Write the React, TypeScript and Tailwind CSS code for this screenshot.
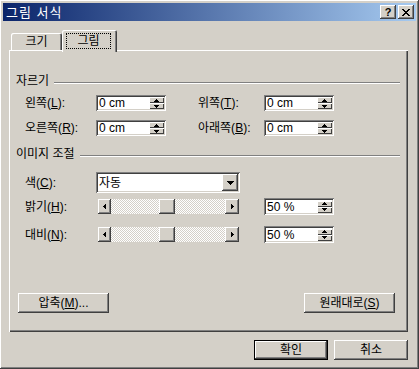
import React from "react";

const raised =
  "shadow-[inset_-1px_-1px_0_#404040,inset_1px_1px_0_#ffffff,inset_-2px_-2px_0_#808080,inset_2px_2px_0_#d4d0c8]";
const sunken =
  "shadow-[inset_1px_1px_0_#808080,inset_-1px_-1px_0_#ffffff,inset_2px_2px_0_#404040,inset_-2px_-2px_0_#d4d0c8]";
const thin = "shadow-[inset_1px_1px_0_#ffffff,inset_-1px_-1px_0_#404040]";
const checker =
  "bg-[repeating-conic-gradient(#ffffff_0_25%,#d4d0c8_0_50%)] bg-[length:2px_2px]";

function Tri({ dir, w = 5, h = 3 }: { dir: "up" | "down" | "left" | "right"; w?: number; h?: number }) {
  const pts: Record<string, string> = {
    up: `${w / 2},0 ${w},${h} 0,${h}`,
    down: `0,0 ${w},0 ${w / 2},${h}`,
    left: `${w},0 ${w},${h} 0,${h / 2}`,
    right: `0,0 ${w},${h / 2} 0,${h}`,
  };
  return (
    <svg width={w} height={h} viewBox={`0 0 ${w} ${h}`} shapeRendering="crispEdges">
      <polygon points={pts[dir]} fill="#000" />
    </svg>
  );
}

function SpinInput({ value, tall }: { value: string; tall?: boolean }) {
  return (
    <div
      className={`${tall ? "h-[17px]" : "h-[16px]"} w-[70px] bg-white ${sunken} flex items-center pl-[3px] pr-[2px]`}
    >
      <span className="flex-1 text-[12px] leading-[12px] text-black">{value}</span>
      <div className="flex flex-col w-[15px] h-[12px]">
        <div className={`flex-1 flex items-center justify-center bg-[#d4d0c8] ${thin}`}>
          <Tri dir="up" w={5} h={3} />
        </div>
        <div className={`flex-1 flex items-center justify-center bg-[#d4d0c8] ${thin}`}>
          <Tri dir="down" w={5} h={3} />
        </div>
      </div>
    </div>
  );
}

function Slider() {
  return (
    <div className="ml-[2px] w-[141px] h-[15px] flex">
      <div className={`w-[13px] h-full bg-[#d4d0c8] ${raised} flex items-center justify-center`}>
        <Tri dir="left" w={3} h={5} />
      </div>
      <div className={`w-[48px] h-full ${checker}`} />
      <div className={`w-[16px] h-full bg-[#d4d0c8] ${raised}`} />
      <div className={`flex-1 h-full ${checker}`} />
      <div className={`w-[14px] h-full bg-[#d4d0c8] ${raised} flex items-center justify-center`}>
        <Tri dir="right" w={3} h={5} />
      </div>
    </div>
  );
}

function GroupHeader({ title, className }: { title: string; className: string }) {
  return (
    <div className={`flex items-center h-[12px] ${className}`}>
      <span className="text-[12px] leading-[12px] text-black">{title}</span>
      <div className="flex-1 ml-[5px] mr-[1px] mt-[3px] h-[2px] border-t border-[#808080] border-b border-b-white" />
    </div>
  );
}

function Label({ children, w = "w-[80px]", pl = "pl-[9px]" }: { children: React.ReactNode; w?: string; pl?: string }) {
  return <span className={`${w} ${pl} text-[12px] leading-[12px] text-black whitespace-nowrap`}>{children}</span>;
}

function Button({ children, w, primary }: { children: React.ReactNode; w: string; primary?: boolean }) {
  if (primary) {
    return (
      <div className={`${w} h-[20px] border border-black`}>
        <div
          className={`w-full h-full ${raised} flex items-center justify-center text-[12px] leading-[12px] text-black`}
        >
          {children}
        </div>
      </div>
    );
  }
  return (
    <div className={`${w} h-[20px] ${raised} flex items-center justify-center text-[12px] leading-[12px] text-black`}>
      {children}
    </div>
  );
}

export default function App() {
  return (
    <div
      className={`w-[419px] h-[369px] bg-[#d4d0c8] p-[3px] flex flex-col font-[family-name:Liberation_Sans,Noto_Sans_CJK_KR,sans-serif] ${raised}`}
    >
      {/* title bar */}
      <div className="h-[18px] bg-[linear-gradient(to_right,#0a246a,#a6caf0)] flex items-center justify-between pl-[3px] pr-[2px]">
        <span className="text-white text-[13px] leading-[13px] tracking-[1px]">그림 서식</span>
        <div className="flex gap-[2px]">
          <div className={`w-[16px] h-[14px] bg-[#d4d0c8] ${raised} flex items-center justify-center`}>
            <span className="font-bold text-[11px] leading-[11px] text-black">?</span>
          </div>
          <div className={`w-[16px] h-[14px] bg-[#d4d0c8] ${raised} flex items-center justify-center`}>
            <svg width="8" height="7" viewBox="0 0 8 7" shapeRendering="crispEdges">
              <path d="M0 0h2v1h1v1h2V1h1V0h2v1H7v1H6v1H5v1h1v1h1v1h1v1H6V6H5V5H3v1H2v1H0V6h1V5h1V4h1V3H2V2H1V1H0z" fill="#000" />
            </svg>
          </div>
        </div>
      </div>

      <div className="pl-[6px] flex flex-col">
        {/* tabs */}
        <div className="mt-[9px] h-[20px] pl-[2px] flex items-end">
          <div className="w-[51px] h-[17px] shadow-[inset_1px_1px_0_#ffffff,inset_-1px_0_0_#404040,inset_-2px_0_0_#808080] rounded-t-[2px] flex items-center justify-center text-[12px] leading-[12px] text-black">
            크기
          </div>
          <div className="relative z-10 w-[55px] h-[22px] -mb-[2px] bg-[#d4d0c8] rounded-t-[2px] shadow-[inset_1px_1px_0_#ffffff,inset_-1px_0_0_#404040,inset_-2px_0_0_#808080] pt-[3px] pl-[4px]">
            <div className="w-[45px] h-[16px] border border-dotted border-black flex items-center justify-center text-[12px] leading-[12px] text-black">
              그림
            </div>
          </div>
        </div>

        {/* panel */}
        <div className="w-[399px] h-[282px] shadow-[inset_1px_1px_0_#ffffff,inset_-1px_-1px_0_#404040,inset_-2px_-2px_0_#808080] flex flex-col px-[7px]">
          <GroupHeader title="자르기" className="mt-[25px]" />
          <div className="mt-[8px] h-[16px] flex items-center">
            <Label>
              왼쪽(<u>L</u>):
            </Label>
            <SpinInput value="0 cm" />
            <Label w="w-[98px]" pl="pl-[32px]">
              위쪽(<u>T</u>):
            </Label>
            <SpinInput value="0 cm" />
          </div>
          <div className="mt-[9px] h-[16px] flex items-center">
            <Label>
              오른쪽(<u>R</u>):
            </Label>
            <SpinInput value="0 cm" />
            <Label w="w-[98px]" pl="pl-[32px]">
              아래쪽(<u>B</u>):
            </Label>
            <SpinInput value="0 cm" />
          </div>

          <GroupHeader title="이미지 조절" className="mt-[12px]" />
          <div className="mt-[12px] h-[21px] flex items-center">
            <Label>
              색(<u>C</u>):
            </Label>
            <div className={`w-[144px] h-[21px] bg-white ${sunken} flex items-center pl-[3px] pr-[2px]`}>
              <span className="flex-1 text-[12px] leading-[12px] text-black">자동</span>
              <div className={`w-[16px] h-[17px] bg-[#d4d0c8] ${raised} flex items-center justify-center`}>
                <Tri dir="down" w={7} h={4} />
              </div>
            </div>
          </div>
          <div className="mt-[5px] h-[17px] flex items-center">
            <Label>
              밝기(<u>H</u>):
            </Label>
            <Slider />
            <div className="ml-[25px]">
              <SpinInput value="50 %" tall />
            </div>
          </div>
          <div className="mt-[11px] h-[17px] flex items-center">
            <Label>
              대비(<u>N</u>):
            </Label>
            <Slider />
            <div className="ml-[25px]">
              <SpinInput value="50 %" tall />
            </div>
          </div>

          <div className="mt-[50px] flex justify-between pl-[2px] pr-[6px]">
            <Button w="w-[91px]">
              압축(<u>M</u>)...
            </Button>
            <Button w="w-[91px]">
              원래대로(<u>S</u>)
            </Button>
          </div>
        </div>

        {/* dialog buttons */}
        <div className="mt-[8px] w-[399px] flex justify-end gap-[6px]">
          <Button w="w-[74px]" primary>
            확인
          </Button>
          <Button w="w-[74px]">취소</Button>
        </div>
      </div>
    </div>
  );
}
